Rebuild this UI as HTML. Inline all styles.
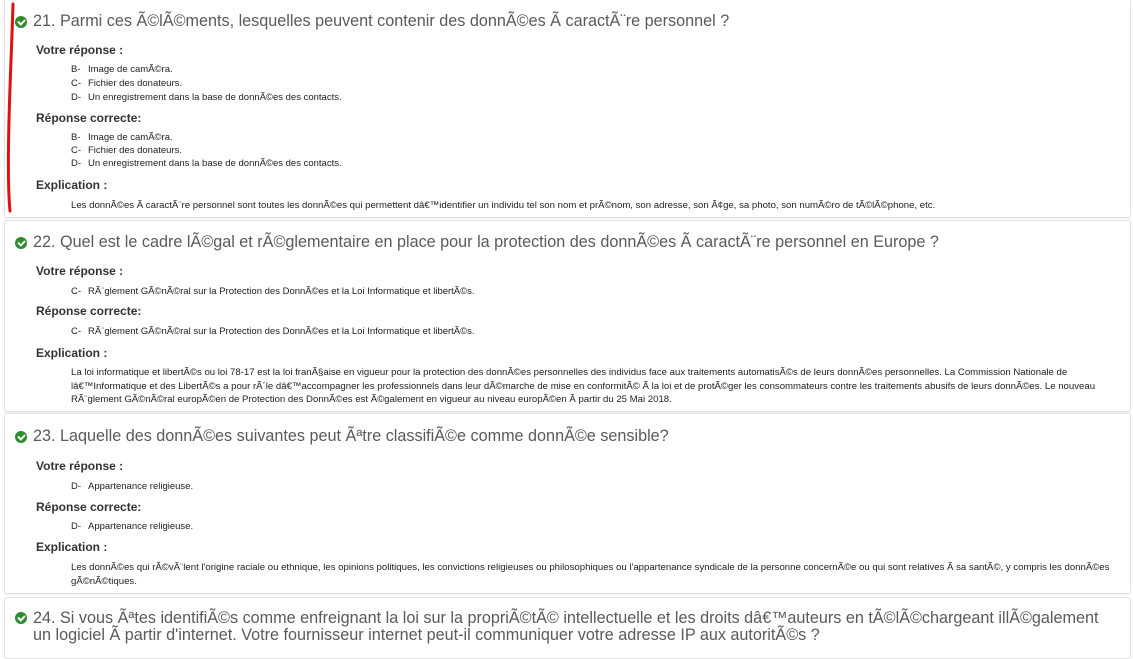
<!DOCTYPE html>
<html><head><meta charset="utf-8"><style>
body{margin:0;width:1133px;height:643px;overflow:hidden;background:#fff;font-family:"Liberation Sans",sans-serif;color:#333;position:relative}
.card{position:absolute;left:4px;width:1125px;border:1px solid #e3e3e3;border-radius:3px;background:#fff;box-shadow:0 1px 1px rgba(0,0,0,.06)}
.t{position:absolute;left:33px;font-size:16.2px;color:#5a5a5a;white-space:nowrap;line-height:17px}
.ic{position:absolute;left:15px;width:12px;height:12px;border-radius:50%;background:#2e8b2e}
.ic:after{content:"";position:absolute;left:3px;top:2.5px;width:5px;height:3px;border-left:2px solid #fff;border-bottom:2px solid #fff;transform:rotate(-45deg)}
.h{position:absolute;left:36px;font-size:12px;font-weight:bold;color:#333;white-space:nowrap;line-height:14px}
.i{position:absolute;left:71px;font-size:9.5px;color:#222;white-space:nowrap;line-height:12px}
.i b{font-weight:normal;display:inline-block;width:17px}
.e{position:absolute;left:71px;font-size:9.6px;color:#222;white-space:nowrap;line-height:13.5px}
</style></head><body>
<div class="card" style="top:-2px;height:218px"></div>
<div class="card" style="top:220px;height:190px"></div>
<div class="card" style="top:413px;height:179px"></div>
<div class="card" style="top:597px;height:60px"></div>

<div class="ic" style="top:16px"></div>
<div class="t" style="top:13px">21. Parmi ces Ã©lÃ©ments, lesquelles peuvent contenir des donnÃ©es Ã  caractÃ¨re personnel ?</div>
<div class="h" style="top:43px">Votre réponse :</div>
<div class="i" style="top:64px"><b>B-</b>Image de camÃ©ra.</div>
<div class="i" style="top:78px"><b>C-</b>Fichier des donateurs.</div>
<div class="i" style="top:92px"><b>D-</b>Un enregistrement dans la base de donnÃ©es des contacts.</div>
<div class="h" style="top:111px">Réponse correcte:</div>
<div class="i" style="top:132px"><b>B-</b>Image de camÃ©ra.</div>
<div class="i" style="top:145px"><b>C-</b>Fichier des donateurs.</div>
<div class="i" style="top:158px"><b>D-</b>Un enregistrement dans la base de donnÃ©es des contacts.</div>
<div class="h" style="top:178px">Explication :</div>
<div class="e" style="top:199px">Les donnÃ©es Ã  caractÃ¨re personnel sont toutes les donnÃ©es qui permettent dâ€™identifier un individu tel son nom et prÃ©nom, son adresse, son Ã¢ge, sa photo, son numÃ©ro de tÃ©lÃ©phone, etc.</div>

<div class="ic" style="top:237px"></div>
<div class="t" style="top:234px">22. Quel est le cadre lÃ©gal et rÃ©glementaire en place pour la protection des donnÃ©es Ã  caractÃ¨re personnel en Europe ?</div>
<div class="h" style="top:264px">Votre réponse :</div>
<div class="i" style="top:286px"><b>C-</b>RÃ¨glement GÃ©nÃ©ral sur la Protection des DonnÃ©es et la Loi Informatique et libertÃ©s.</div>
<div class="h" style="top:304px">Réponse correcte:</div>
<div class="i" style="top:326px"><b>C-</b>RÃ¨glement GÃ©nÃ©ral sur la Protection des DonnÃ©es et la Loi Informatique et libertÃ©s.</div>
<div class="h" style="top:346px">Explication :</div>
<div class="e" style="top:366px">La loi informatique et libertÃ©s ou loi 78-17 est la loi franÃ§aise en vigueur pour la protection des donnÃ©es personnelles des individus face aux traitements automatisÃ©s de leurs donnÃ©es personnelles. La Commission Nationale de<br>lâ€™Informatique et des LibertÃ©s a pour rÃ´le dâ€™accompagner les professionnels dans leur dÃ©marche de mise en conformitÃ© Ã  la loi et de protÃ©ger les consommateurs contre les traitements abusifs de leurs donnÃ©es. Le nouveau<br>RÃ¨glement GÃ©nÃ©ral europÃ©en de Protection des DonnÃ©es est Ã©galement en vigueur au niveau europÃ©en Ã  partir du 25 Mai 2018.</div>

<div class="ic" style="top:431px"></div>
<div class="t" style="top:428px">23. Laquelle des donnÃ©es suivantes peut Ãªtre classifiÃ©e comme donnÃ©e sensible?</div>
<div class="h" style="top:459px">Votre réponse :</div>
<div class="i" style="top:481px"><b>D-</b>Appartenance religieuse.</div>
<div class="h" style="top:500px">Réponse correcte:</div>
<div class="i" style="top:521px"><b>D-</b>Appartenance religieuse.</div>
<div class="h" style="top:540px">Explication :</div>
<div class="e" style="top:561px">Les donnÃ©es qui rÃ©vÃ¨lent l'origine raciale ou ethnique, les opinions politiques, les convictions religieuses ou philosophiques ou l'appartenance syndicale de la personne concernÃ©e ou qui sont relatives Ã  sa santÃ©, y compris les donnÃ©es<br>gÃ©nÃ©tiques.</div>

<div class="ic" style="top:612px"></div>
<div class="t" style="top:610px;line-height:17px">24. Si vous Ãªtes identifiÃ©s comme enfreignant la loi sur la propriÃ©tÃ© intellectuelle et les droits dâ€™auteurs en tÃ©lÃ©chargeant illÃ©galement<br>un logiciel Ã  partir d'internet. Votre fournisseur internet peut-il communiquer votre adresse IP aux autoritÃ©s ?</div>

<svg style="position:absolute;left:0;top:0" width="30" height="220"><path d="M13 4 C12 40 10 80 9 120 C8 160 8 190 10 211" stroke="#e01010" stroke-width="3" fill="none" stroke-linecap="round"/></svg>
</body></html>
